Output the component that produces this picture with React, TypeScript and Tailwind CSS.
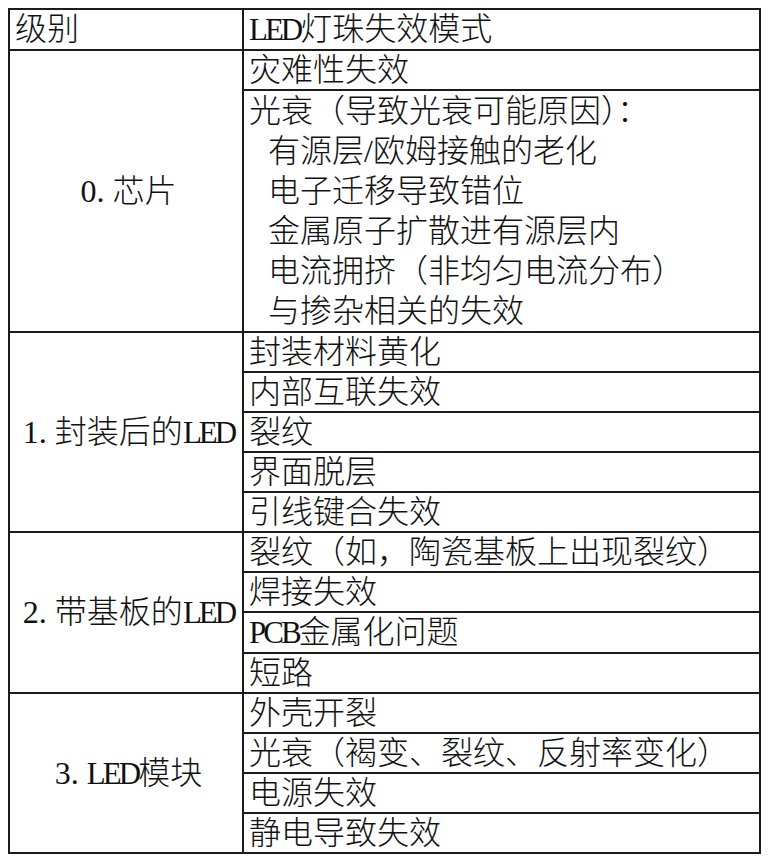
import React from 'react';

type Row = string | { head: string; items: string[] };

const groups: { label: string; rows: Row[] }[] = [
  {
    label: '0. 芯片',
    rows: [
      '灾难性失效',
      {
        head: '光衰（导致光衰可能原因）：',
        items: ['有源层/欧姆接触的老化', '电子迁移导致错位', '金属原子扩散进有源层内', '电流拥挤（非均匀电流分布）', '与掺杂相关的失效'],
      },
    ],
  },
  { label: '1. 封装后的LED', rows: ['封装材料黄化', '内部互联失效', '裂纹', '界面脱层', '引线键合失效'] },
  { label: '2. 带基板的LED', rows: ['裂纹（如，陶瓷基板上出现裂纹）', '焊接失效', 'PCB金属化问题', '短路'] },
  { label: '3. LED模块', rows: ['外壳开裂', '光衰（褐变、裂纹、反射率变化）', '电源失效', '静电导致失效'] },
];

const fmt = (text: string) =>
  text.split(/([A-Z]+)/).map((part, i) =>
    /^[A-Z]+$/.test(part) ? (
      <span key={i} className="text-[31px] tracking-[-3px]">
        {part}
      </span>
    ) : (
      <React.Fragment key={i}>{part}</React.Fragment>
    )
  );

const cell = 'border-2 border-[#1c1c1c] p-0 pl-[5px] align-middle whitespace-nowrap';

const App = () => {
  return (
    <div className="w-[774px] h-[865px] bg-white pt-[8px] pl-[8px]">
      <table className="border-collapse w-[753px] text-[32px] font-light text-[#111] font-['Liberation_Serif','Noto_Sans_CJK_SC',serif]">
        <tbody>
          <tr>
            <td className={`${cell} w-[234px] leading-[39px]`}>级别</td>
            <td className={`${cell} leading-[39px]`}>{fmt('LED灯珠失效模式')}</td>
          </tr>
          {groups.map(g =>
            g.rows.map((r, i) => (
              <tr key={`${g.label}-${i}`}>
                {i === 0 && (
                  <td rowSpan={g.rows.length} className={`${cell} pl-0 text-center leading-[38px]`}>
                    {fmt(g.label)}
                  </td>
                )}
                {typeof r === 'string' ? (
                  <td className={`${cell} leading-[38px]`}>{fmt(r)}</td>
                ) : (
                  <td className={`${cell} leading-[40px]`}>
                    <div>{r.head}</div>
                    {r.items.map(it => (
                      <div key={it} className="pl-[19px]">
                        {it}
                      </div>
                    ))}
                  </td>
                )}
              </tr>
            ))
          )}
        </tbody>
      </table>
    </div>
  );
};

export default App;
